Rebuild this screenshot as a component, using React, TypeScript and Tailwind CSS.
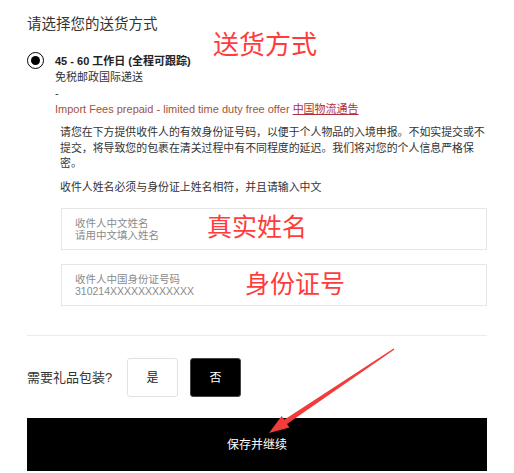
const font = "font-['Liberation_Sans','Noto_Sans_CJK_SC',sans-serif]";
const cjk = "font-['Noto_Sans_CJK_SC',sans-serif]";

function Field({ label, hint }: { label: string; hint: string }) {
  return (
    <div className="ml-[1px] flex h-[42px] flex-col justify-center border border-[#e6e6e6] pl-[13px] text-[10.5px] leading-[12px] text-[#8a8a8a]">
      <span>{label}</span>
      <span>{hint}</span>
    </div>
  );
}

export default function App() {
  return (
    <div className={`relative h-[473px] w-[514px] overflow-hidden bg-white px-[27px] pt-[14px] text-[#333] ${font}`}>
      <h2 className="text-[14.5px] leading-[20px] text-[#333]">请选择您的送货方式</h2>

      <div className="mt-[19px] flex gap-[11px]">
        <span className="mt-[-1px] flex h-[17px] w-[17px] shrink-0 items-center justify-center rounded-full border-[1.5px] border-black">
          <span className="h-[9px] w-[9px] rounded-full bg-black" />
        </span>
        <div className="text-[11px] leading-[16px]">
          <p className="text-[11px] font-bold text-[#222]">45 - 60 工作日 (全程可跟踪)</p>
          <p>免税邮政国际递送</p>
          <p>-</p>
          <p className="text-[#a4523c]">
            Import Fees prepaid - limited time duty free offer{" "}
            <a href="#" className="text-[#b0303a] underline">中国物流通告</a>
          </p>
        </div>
      </div>

      <div className="ml-[33px] mt-[8px]">
        <p className="text-[10.9px] leading-[15.5px]">
          请您在下方提供收件人的有效身份证号码，以便于个人物品的入境申报。不如实提交或不提交，将导致您的包裹在清关过程中有不同程度的延迟。我们将对您的个人信息严格保
          <br />
          密。
        </p>
        <p className="mt-[8px] text-[10.9px] leading-[15.5px]">收件人姓名必须与身份证上姓名相符，并且请输入中文</p>

        <div className="mt-[13px] flex flex-col gap-[14px]">
          <Field label="收件人中文姓名" hint="请用中文填入姓名" />
          <Field label="收件人中国身份证号码" hint="310214XXXXXXXXXXXX" />
        </div>
      </div>

      <div className="mt-[29px] border-t border-[#ebebeb]" />

      <div className="mt-[22px] flex items-center">
        <span className="w-[100px] text-[13px] text-[#333]">需要礼品包装?</span>
        <div className="flex gap-[12px]">
          <button className="h-[39px] w-[51px] rounded-[3px] border border-[#e2e2e2] bg-white text-[12px] text-[#222]">是</button>
          <button className="h-[39px] w-[51px] rounded-[3px] border border-[#444] bg-black text-[12px] text-white">否</button>
        </div>
      </div>

      <button className="mt-[21px] flex h-[53px] w-full items-center justify-center bg-black text-[12px] text-white">
        保存并继续
      </button>

      <span className={`absolute left-[213px] top-[30px] text-[26px] leading-none text-[#ff3c3c] ${cjk}`}>送货方式</span>
      <span className={`absolute left-[207px] top-[213px] text-[25px] leading-none text-[#ff3c3c] ${cjk}`}>真实姓名</span>
      <span className={`absolute left-[245px] top-[270px] text-[25px] leading-none text-[#ff3c3c] ${cjk}`}>身份证号</span>

      <svg className="pointer-events-none absolute left-0 top-0" width="514" height="473" viewBox="0 0 514 473">
        <polygon
          points="269,433 281.7,416 284.2,419.7 393.6,348.6 394.4,349.4 287,423.9 289.5,427.6"
          fill="#f23b3b"
        />
      </svg>
    </div>
  );
}
